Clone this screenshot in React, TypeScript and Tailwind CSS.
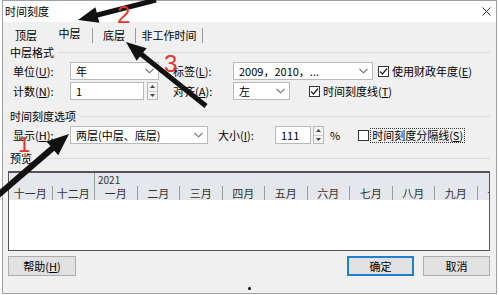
import React from 'react'

function Chevron() {
  return (
    <svg width="9" height="6" viewBox="0 0 9 6" className="shrink-0">
      <path d="M0.5 0.8 L4.5 4.8 L8.5 0.8" fill="none" stroke="#6a6a6a" strokeWidth="1.1" />
    </svg>
  )
}

function Combo({ w, text }: { w: string; text: string }) {
  return (
    <div className={`h-[18px] bg-white border border-[#b9b9b9] flex items-center justify-between pl-[5px] pr-[4px] shrink-0 ${w}`}>
      <span className="whitespace-nowrap">{text}</span>
      <Chevron />
    </div>
  )
}

function Spin() {
  return (
    <div className="w-[11px] h-[18px] flex flex-col border border-[#b9b9b9] bg-[#f4f4f4] shrink-0">
      <div className="flex-1 flex items-center justify-center border-b border-[#cfcfcf]">
        <svg width="5" height="3" viewBox="0 0 5 3"><path d="M0 3 L2.5 0 L5 3Z" fill="#444" /></svg>
      </div>
      <div className="flex-1 flex items-center justify-center">
        <svg width="5" height="3" viewBox="0 0 5 3"><path d="M0 0 L2.5 3 L5 0Z" fill="#444" /></svg>
      </div>
    </div>
  )
}

function Check({ on }: { on?: boolean }) {
  return (
    <div className="w-[11px] h-[11px] border border-[#333] bg-white flex items-center justify-center shrink-0">
      {on && (
        <svg width="9" height="9" viewBox="0 0 9 9">
          <path d="M1 4.5 L3.5 7 L8 1.5" fill="none" stroke="#222" strokeWidth="1.2" />
        </svg>
      )}
    </div>
  )
}

function Acc({ t, k, colon = true }: { t: string; k: string; colon?: boolean }) {
  return (
    <span className="whitespace-nowrap">
      {t}(<u>{k}</u>){colon ? ':' : ''}
    </span>
  )
}

function Group({ title }: { title: string }) {
  return (
    <div className="flex items-center gap-[4px] h-[14px] ml-[7px] mr-[6px]">
      <span>{title}</span>
      <div className="flex-1 border-t border-[#dcdcdc]" />
    </div>
  )
}

function arrowPts(x1: number, y1: number, x2: number, y2: number, w: number, L: number, H: number) {
  const dx = x2 - x1
  const dy = y2 - y1
  const len = Math.hypot(dx, dy)
  const ux = dx / len
  const uy = dy / len
  const px = -uy
  const py = ux
  const bx = x2 - ux * L
  const by = y2 - uy * L
  const p = [
    [x1 + (px * w) / 2, y1 + (py * w) / 2],
    [bx + (px * w) / 2, by + (py * w) / 2],
    [bx + px * H, by + py * H],
    [x2, y2],
    [bx - px * H, by - py * H],
    [bx - (px * w) / 2, by - (py * w) / 2],
    [x1 - (px * w) / 2, y1 - (py * w) / 2],
  ]
  return p.map(q => q.join(',')).join(' ')
}

const months = ['十一月', '十二月', '一月', '二月', '三月', '四月', '五月', '六月', '七月', '八月', '九月', '十月']

export default function App() {
  return (
    <div className="w-[499px] h-[295px] bg-white relative overflow-hidden text-[11px] leading-none text-black font-['Noto_Sans_CJK_SC',sans-serif]">
      <div className="ml-[2px] w-[495px] h-[294px] border border-[#a0a0a0] bg-[#f0f0f0] flex flex-col">
        {/* title bar */}
        <div className="h-[21px] bg-white flex items-center justify-between pl-[2px] pr-[5px] shrink-0">
          <span>时间刻度</span>
          <svg width="9" height="9" viewBox="0 0 9 9">
            <path d="M0.5 0.5 L8.5 8.5 M8.5 0.5 L0.5 8.5" stroke="#333" strokeWidth="1" />
          </svg>
        </div>

        {/* tabs */}
        <div className="h-[23px] flex items-center shrink-0 pl-[2px]">
          <div className="w-[42px] h-[15px] mt-[3px] flex items-center justify-center">顶层</div>
          <div className="w-[45px] h-[15px] flex items-center justify-center">中层</div>
          <div className="w-px h-[15px] mt-[4px] bg-[#9a9a9a]" />
          <div className="w-[42px] h-[15px] mt-[3px] flex items-center justify-center">底层</div>
          <div className="w-px h-[15px] mt-[4px] bg-[#9a9a9a]" />
          <div className="w-[66px] h-[15px] mt-[3px] flex items-center justify-center">非工作时间</div>
          <div className="w-px h-[15px] mt-[4px] bg-[#9a9a9a]" />
        </div>

        {/* panel */}
        <div className="flex-1 flex flex-col">
          <Group title="中层格式" />

          <div className="flex items-center h-[18px] mt-[3px] ml-[10px]">
            <div className="w-[57px] shrink-0"><Acc t="单位" k="U" /></div>
            <Combo w="w-[89px]" text="年" />
            <div className="w-[60px] ml-[14px] shrink-0"><Acc t="标签" k="L" /></div>
            <Combo w="w-[140px]" text="2009，2010，..." />
            <div className="ml-[5px] flex items-center gap-[3px]">
              <Check on />
              <Acc t="使用财政年度" k="E" colon={false} />
            </div>
          </div>

          <div className="flex items-center h-[18px] mt-[2px] ml-[10px]">
            <div className="w-[57px] shrink-0"><Acc t="计数" k="N" /></div>
            <div className="w-[74px] h-[18px] bg-white border border-[#b9b9b9] flex items-center pl-[5px] shrink-0">1</div>
            <div className="ml-[3px]"><Spin /></div>
            <div className="w-[60px] ml-[15px] shrink-0"><Acc t="对齐" k="A" /></div>
            <Combo w="w-[57px]" text="左" />
            <div className="ml-[19px] flex items-center gap-[3px]">
              <Check on />
              <Acc t="时间刻度线" k="T" colon={false} />
            </div>
          </div>

          <div className="mt-[9px]">
            <Group title="时间刻度选项" />
          </div>

          <div className="flex items-center h-[18px] mt-[3px] ml-[10px]">
            <div className="w-[57px] shrink-0"><Acc t="显示" k="H" /></div>
            <Combo w="w-[138px]" text="两层(中层、底层)" />
            <div className="w-[57px] ml-[10px] shrink-0"><Acc t="大小" k="I" /></div>
            <div className="w-[36px] h-[18px] bg-white border border-[#b9b9b9] flex items-center pl-[5px] shrink-0">111</div>
            <div className="ml-[2px]"><Spin /></div>
            <span className="ml-[6px]">%</span>
            <div className="ml-[18px] flex items-center gap-[1px]">
              <Check />
              <span className="border border-dotted border-[#333] px-[1px] py-[1px]">
                时间刻度分隔线(<u>S</u>)
              </span>
            </div>
          </div>

          <div className="mt-[7px]">
            <Group title="预览" />
          </div>

          {/* preview */}
          <div className="mt-[6px] ml-[5px] w-[482px] h-[80px] border border-[#555] border-t-2 bg-white overflow-hidden flex flex-col">
            <div className="h-[27px] bg-[#e4e7eb] flex shrink-0">
              {months.map((m, i) => (
                <div
                  key={m}
                  className={`w-[42.5px] shrink-0 flex flex-col ${i === 2 ? 'border-l border-[#9a9a9a]' : ''}`}
                >
                  <div className="h-[13px] pl-[3px] pt-[2px] text-[10px] text-[#333]">{i === 2 ? '2021' : ''}</div>
                  <div
                    className={`h-[14px] flex items-center justify-center whitespace-nowrap text-[#333] ${i !== 0 && i !== 2 ? 'border-l border-[#9a9a9a]' : ''}`}
                  >
                    {m}
                  </div>
                </div>
              ))}
            </div>
          </div>

          {/* buttons */}
          <div className="flex items-center mt-[5px] ml-[5px] h-[20px]">
            <div className="w-[68px] h-[20px] bg-[#e1e1e1] border border-[#adadad] flex items-center justify-center">
              帮助(<u>H</u>)
            </div>
            <div className="ml-[271px] w-[67px] h-[20px] bg-[#e1e1e1] border-2 border-[#1f7fd0] flex items-center justify-center">
              确定
            </div>
            <div className="ml-[9px] w-[67px] h-[20px] bg-[#e1e1e1] border border-[#adadad] flex items-center justify-center">
              取消
            </div>
          </div>
        </div>
      </div>

      {/* annotations */}
      <svg className="absolute inset-0 pointer-events-none" width="499" height="295" viewBox="0 0 499 295">
        <polygon points={arrowPts(156, 0, 78, 20, 5, 20, 8)} fill="#111" />
        <polygon points={arrowPts(206, 106, 126, 42, 5, 20, 8)} fill="#111" />
        <polygon points={arrowPts(-4, 197, 69, 134, 6, 22, 9)} fill="#111" />
      </svg>
      <span className="absolute left-[117px] top-[3px] text-[24px] leading-none text-[#e3352e] font-['Liberation_Sans',sans-serif]">2</span>
      <span className="absolute left-[164px] top-[52px] text-[24px] leading-none text-[#e3352e] font-['Liberation_Sans',sans-serif]">3</span>
      <span className="absolute left-[18px] top-[134px] text-[22px] leading-none text-[#e3352e] font-['Liberation_Sans',sans-serif]">1</span>
      <div className="absolute left-[248px] top-[287px] w-[3px] h-[3px] rounded-full bg-black" />
    </div>
  )
}
